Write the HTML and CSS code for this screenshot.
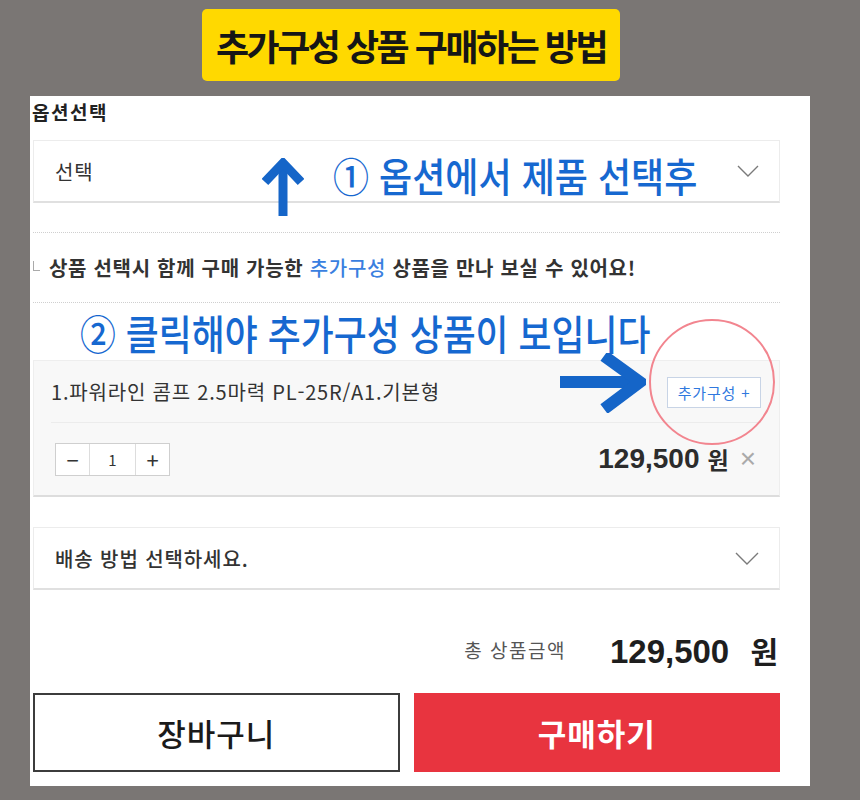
FILE: index.html
```html
<!DOCTYPE html>
<html lang="ko">
<head>
  <meta charset="utf-8">
  <title>추가구성 상품 구매하는 방법</title>
  <link rel="stylesheet" href="styles.css">
</head>
<body>
  <div class="title">추가구성 상품 구매하는 방법</div>

  <div class="panel">
    <div class="label">옵션선택</div>

    <div class="select">
      <span>선택</span>
      <svg class="chevron" width="22" height="12" viewBox="0 0 22 12"><polyline points="1,1 11,11 21,1" fill="none" stroke="#7a7a7a" stroke-width="1.4"/></svg>
      <!-- guide 1: arrow + caption over the select box -->
      <svg class="arrow-up" width="42" height="58" viewBox="0 0 42 58">
        <path d="M21 4 L21 58" stroke="#1565c8" stroke-width="9" fill="none"/>
        <path d="M3 24 L21 5 L39 24" stroke="#1565c8" stroke-width="9" fill="none" stroke-linejoin="miter"/>
      </svg>
      <div class="guide guide-1">① 옵션에서 제품 선택후</div>
    </div>

    <div class="notice">
      <span class="corner"></span>
      <span>상품 선택시 함께 구매 가능한 <em>추가구성</em> 상품을 만나 보실 수 있어요!</span>
    </div>

    <div class="guide-row"><div class="guide guide-2">② 클릭해야 추가구성 상품이 보입니다</div></div>

    <div class="item">
      <div class="item-top">
        <span class="item-name">1.파워라인 콤프 2.5마력 PL-25R/A1.기본형</span>
        <button class="add-btn">추가구성 +</button>
      </div>
      <div class="item-bottom">
        <div class="qty">
          <span class="qty-btn">−</span>
          <span class="qty-num">1</span>
          <span class="qty-btn">+</span>
        </div>
        <div class="item-price">129,500 <span class="won">원</span><span class="remove">×</span></div>
      </div>
      <!-- guide 2: arrow + circle on the add button -->
      <svg class="arrow-right" width="86" height="60" viewBox="0 0 86 60">
        <path d="M0 29 L80 29" stroke="#1565c8" stroke-width="12" fill="none"/>
        <path d="M44 3 L80 29 L44 56" stroke="#1565c8" stroke-width="12" fill="none" stroke-linejoin="miter"/>
      </svg>
      <span class="circle"></span>
    </div>

    <div class="select delivery">
      <span>배송 방법 선택하세요.</span>
      <svg class="chevron" width="24" height="13" viewBox="0 0 24 13"><polyline points="1,1 12,12 23,1" fill="none" stroke="#7a7a7a" stroke-width="1.4"/></svg>
    </div>

    <div class="total">
      <span class="total-label">총 상품금액</span>
      <strong class="total-price">129,500 <span class="won">원</span></strong>
    </div>

    <div class="buttons">
      <button class="btn btn-cart">장바구니</button>
      <button class="btn btn-buy">구매하기</button>
    </div>
  </div>
</body>
</html>
```

FILE: styles.css
```css
* {
  margin: 0;
  padding: 0;
  box-sizing: border-box;
}

body {
  font-family: "Noto Sans CJK KR", "Noto Sans", sans-serif;
  background: #7a7674;
  color: #333;
  padding-top: 9px;
}

.title {
  width: 418px;
  height: 72px;
  margin-left: 202px;
  background: #ffd900;
  border-radius: 5px;
  display: flex;
  align-items: center;
  justify-content: center;
  font-size: 36px;
  font-weight: 700;
  color: #161616;
  letter-spacing: -2.5px;
}

.panel {
  position: relative;
  width: 780px;
  margin: 15px 0 0 30px;
  background: #fff;
  padding: 0 30px 14px 3px;
}

.label {
  font-size: 19px;
  font-weight: 700;
  color: #222;
  line-height: 26px;
  padding-top: 3px;
  margin-bottom: 15px;
  margin-left: -1px;
  letter-spacing: 1.5px;
}

.select {
  position: relative;
  height: 63px;
  border: 1px solid #ececec;
  border-bottom: 2px solid #e0e0e0;
  display: flex;
  align-items: center;
  justify-content: space-between;
  padding: 0 20px 0 21px;
  font-size: 20px;
  letter-spacing: 0.9px;
  color: #333;
}

.arrow-up {
  position: absolute;
  left: 228px;
  top: 17px;
}

.guide {
  color: #1668d0;
  font-weight: 500;
  letter-spacing: 0;
  white-space: nowrap;
  transform-origin: left center;
}

.guide-1 {
  position: absolute;
  left: 299px;
  top: 12px;
  font-size: 40px;
  line-height: 44px;
  transform: scaleX(0.9);
}

.notice {
  margin-top: 29px;
  height: 71px;
  border-top: 1px dotted #cfcfcf;
  border-bottom: 1px dotted #cfcfcf;
  display: flex;
  align-items: center;
  gap: 9px;
  font-size: 20px;
  font-weight: 700;
  color: #333;
  letter-spacing: 0.7px;
}

.notice em {
  font-style: normal;
  font-weight: 500;
  color: #3a7fe0;
}

.corner {
  width: 7px;
  height: 10px;
  border-left: 1px solid #aaa;
  border-bottom: 1px solid #aaa;
  margin-top: -4px;
}

.guide-row {
  height: 57px;
  padding-left: 47px;
  display: flex;
  align-items: center;
}

.guide-2 {
  font-size: 41px;
  line-height: 48px;
  transform: scaleX(0.874);
}

.item {
  position: relative;
  height: 137px;
  background: #f8f8f8;
  border: 1px solid #eee;
  border-bottom: 2px solid #ddd;
  padding: 0 18px 0 17px;
}

.item-top {
  height: 62px;
  display: flex;
  align-items: center;
  justify-content: space-between;
  border-bottom: 1px solid #ececec;
}

.item-name {
  font-size: 20px;
  color: #333;
  letter-spacing: 0.8px;
}

.add-btn {
  font-family: inherit;
  width: 94px;
  height: 31px;
  background: #fff;
  border: 1px solid #c8d4e6;
  color: #2f78de;
  font-size: 15px;
  letter-spacing: 0.8px;
  margin-top: 2px;
}

.item-bottom {
  height: 72px;
  display: flex;
  align-items: center;
  justify-content: space-between;
  padding-left: 4px;
}

.qty {
  display: flex;
  height: 33px;
  border: 1px solid #cfcfcf;
  background: #fff;
}

.qty span {
  display: flex;
  align-items: center;
  justify-content: center;
}

.qty-btn {
  width: 33px;
  font-size: 22px;
  color: #333;
}

.qty-num {
  width: 47px;
  border-left: 1px solid #ddd;
  border-right: 1px solid #ddd;
  font-size: 15px;
}

.item-price {
  font-family: "Liberation Sans", "Noto Sans CJK KR", sans-serif;
  font-size: 28px;
  font-weight: 700;
  color: #2c2c2c;
  display: flex;
  align-items: center;
}

.item-price .won {
  font-family: "Noto Sans CJK KR", sans-serif;
  font-size: 23px;
  margin-left: 8px;
}

.remove {
  font-weight: 300;
  font-size: 28px;
  color: #aaa;
  margin: 0 5px 0 11px;
}

.arrow-right {
  position: absolute;
  left: 526px;
  top: -8px;
}

.circle {
  position: absolute;
  left: 615px;
  top: -42px;
  width: 126px;
  height: 126px;
  border: 2px solid #f2858f;
  border-radius: 50%;
}

.delivery {
  margin-top: 30px;
  font-weight: 500;
}

.total {
  height: 103px;
  padding: 16px 2px 0 0;
  display: flex;
  align-items: center;
  justify-content: flex-end;
  gap: 44px;
}

.total-label {
  font-size: 19px;
  color: #555;
  letter-spacing: 1.5px;
}

.total-price {
  font-family: "Liberation Sans", "Noto Sans CJK KR", sans-serif;
  font-size: 33px;
  color: #1e1e1e;
}

.total-price .won {
  font-family: "Noto Sans CJK KR", sans-serif;
  font-size: 30px;
  margin-left: 12px;
}

.buttons {
  display: grid;
  grid-template-columns: 1fr 1fr;
  gap: 14px;
}

.btn {
  font-family: inherit;
  height: 79px;
  font-size: 31px;
  font-weight: 500;
  letter-spacing: 1px;
  cursor: pointer;
}

.btn-cart {
  background: #fff;
  border: 2px solid #3c3c3c;
  color: #1a1a1a;
}

.btn-buy {
  background: #e8343f;
  border: none;
  color: #fff;
  font-weight: 700;
}
```
